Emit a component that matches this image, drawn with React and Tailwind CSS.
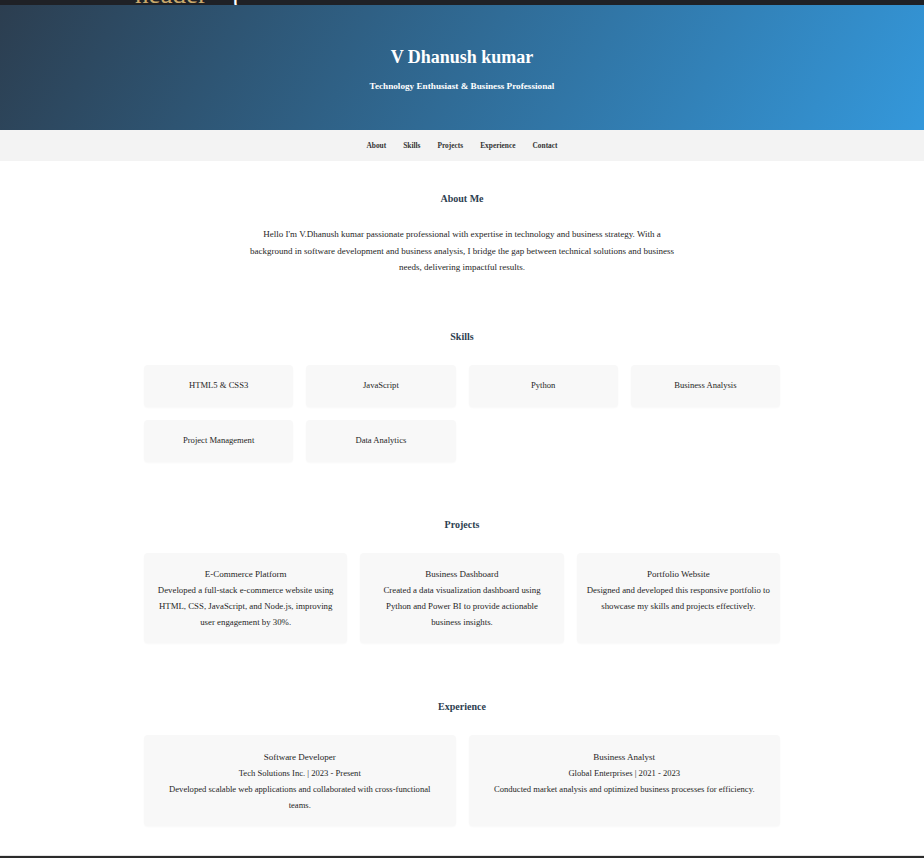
import React from "react";

const serif = { fontFamily: '"Liberation Serif", "Times New Roman", serif' };

const skills = [
  "HTML5 & CSS3",
  "JavaScript",
  "Python",
  "Business Analysis",
  "Project Management",
  "Data Analytics",
];

const projects = [
  {
    title: "E-Commerce Platform",
    desc: "Developed a full-stack e-commerce website using HTML, CSS, JavaScript, and Node.js, improving user engagement by 30%.",
  },
  {
    title: "Business Dashboard",
    desc: "Created a data visualization dashboard using\nPython and Power BI to provide actionable\nbusiness insights.",
  },
  {
    title: "Portfolio Website",
    desc: "Designed and developed this responsive portfolio to showcase my skills and projects effectively.",
  },
];

const experience = [
  {
    title: "Software Developer",
    sub: "Tech Solutions Inc. | 2023 - Present",
    desc: "Developed scalable web applications and collaborated with cross-functional teams.",
  },
  {
    title: "Business Analyst",
    sub: "Global Enterprises | 2021 - 2023",
    desc: "Conducted market analysis and optimized business processes for efficiency.",
  },
];

function Heading({ children }) {
  return (
    <h2 className="text-center text-[10px] leading-[14px] font-bold text-[#2c3e50] mb-[21px]">
      {children}
    </h2>
  );
}

export default function App() {
  return (
    <div className="min-h-[858px] bg-white text-[#262626]" style={serif}>
      <div className="h-[5px] bg-[#1f2126] overflow-hidden flex items-end pl-[135px] gap-[22px]">
        <span className="text-[27px] leading-[21px] text-[#c9a96b]">header</span>
        <span className="text-[27px] leading-[21px] text-white">{"{"}</span>
      </div>
      <header className="bg-[linear-gradient(120deg,#2c3e50_0%,#3498db_100%)] pt-[40px] pb-[38px] text-center text-white">
        <h1 className="text-[18px] leading-[24px] font-bold">V Dhanush kumar</h1>
        <p className="mt-[11px] text-[9.2px] leading-[12px] font-bold">
          Technology Enthusiast &amp; Business Professional
        </p>
      </header>
      <nav className="h-[31px] bg-[#f3f3f3] flex items-center justify-center gap-[17px] text-[7.4px] font-bold text-[#333]">
        <span>About</span>
        <span>Skills</span>
        <span>Projects</span>
        <span>Experience</span>
        <span>Contact</span>
      </nav>

      <section className="pt-[31px] pb-[24px]">
        <h2 className="text-center text-[10px] leading-[14px] font-bold text-[#2c3e50] mb-[20px]">
          About Me
        </h2>
        <p className="mx-auto w-[434px] text-center text-[9px] leading-[16.5px]">
          Hello I'm V.Dhanush kumar passionate professional with expertise in technology and business strategy. With a background in software development and business analysis, I bridge the gap between technical solutions and business needs, delivering impactful results.
        </p>
      </section>

      <section className="pt-[30px] pb-[26px]">
        <Heading>Skills</Heading>
        <div className="mx-auto w-[636px] grid grid-cols-4 gap-[13px]">
          {skills.map((s) => (
            <div
              key={s}
              className="h-[42px] rounded-[4px] bg-[#f8f8f8] shadow-[0_1px_2px_rgba(0,0,0,0.03)] flex items-center justify-center text-[8.6px]"
            >
              {s}
            </div>
          ))}
        </div>
      </section>

      <section className="pt-[30px] pb-[26px]">
        <Heading>Projects</Heading>
        <div className="mx-auto w-[636px] grid grid-cols-3 gap-[13px]">
          {projects.map((p) => (
            <div
              key={p.title}
              className="h-[90px] rounded-[4px] bg-[#f8f8f8] shadow-[0_1px_2px_rgba(0,0,0,0.03)] px-[9px] pt-[13px] text-center"
            >
              <h3 className="text-[9px] leading-[16px]">{p.title}</h3>
              <p className="text-[8.8px] leading-[16px] whitespace-pre-line">{p.desc}</p>
            </div>
          ))}
        </div>
      </section>

      <section className="pt-[31px] pb-[29px]">
        <Heading>Experience</Heading>
        <div className="mx-auto w-[636px] grid grid-cols-2 gap-[13px]">
          {experience.map((e) => (
            <div
              key={e.title}
              className="h-[91px] rounded-[4px] bg-[#f8f8f8] shadow-[0_1px_2px_rgba(0,0,0,0.03)] px-[16px] pt-[14px] text-center"
            >
              <h3 className="text-[9px] leading-[16px]">{e.title}</h3>
              <p className="text-[8.6px] leading-[16px]">{e.sub}</p>
              <p className="text-[8.6px] leading-[16px]">{e.desc}</p>
            </div>
          ))}
        </div>
      </section>

      <footer className="h-[40px] border-t border-[#e5e5e5] bg-[#2b2b2b]"></footer>
    </div>
  );
}
